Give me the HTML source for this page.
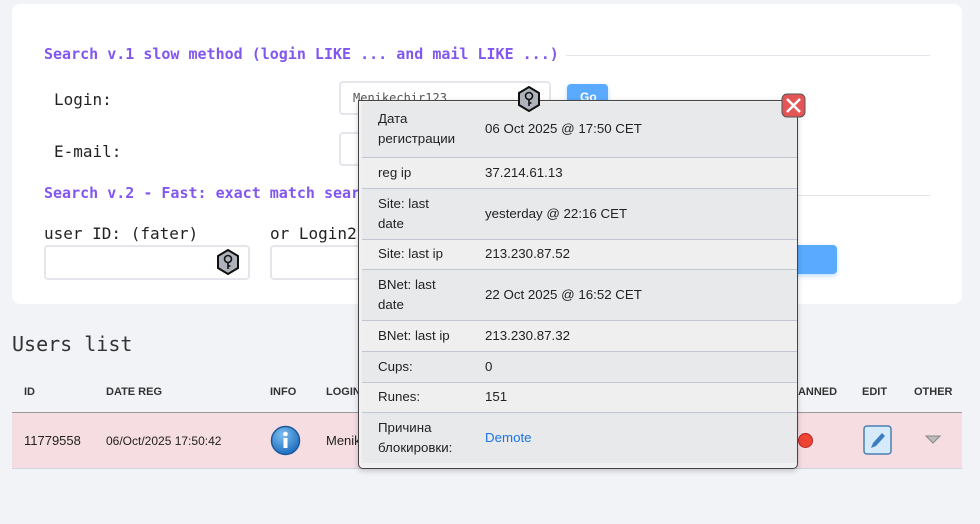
<!DOCTYPE html>
<html><head><meta charset="utf-8"><style>
*{box-sizing:border-box;margin:0;padding:0}
body{width:980px;height:524px;background:#f2f3f7;position:relative;overflow:hidden;font-family:"Liberation Sans",sans-serif}
.mono{font-family:"DejaVu Sans Mono","Liberation Mono",monospace}
.card{position:absolute;left:12px;top:4px;width:950px;height:300px;background:#fff;border-radius:8px}
.h{position:absolute;color:#8257f0;font-size:15px;font-weight:bold}
.line{position:absolute;height:1px;background:#e2e4ea}
.lbl{position:absolute;font-size:16px;color:#222}
.inp{position:absolute;border:2px solid #e4e6ec;border-radius:4px;background:#fff}
.btn{position:absolute;background:#5aabff;border-radius:4px;box-shadow:0 2px 5px rgba(90,170,255,.4)}
.hex{position:absolute;width:26px;height:26px}
.th{position:absolute;top:386px;font-size:11px;font-weight:bold;color:#333}
.pop{position:absolute;left:358px;top:100px;width:440px;height:369px;background:#f0f0f0;border:1px solid #444;border-radius:0 0 5px 5px;box-shadow:0 2px 6px rgba(0,0,0,.2)}
.pop table{position:absolute;left:3px;top:1px;width:435px;border-collapse:collapse;font-size:13.3px;color:#222}
.pop td{border-bottom:1px solid #c1c5d4;padding:0 0 0 16px;line-height:20px;vertical-align:middle}
.pop tr:nth-child(odd){background:#e8e9eb}
.pop tr:nth-child(even){background:#efefef}
.pop td:first-child{width:121px}
.pop td:last-child{padding-left:2px}
</style></head><body>
<div class="card"></div>
<div class="h mono" style="left:44px;top:45px">Search v.1 slow method (login LIKE ... and mail LIKE ...)</div>
<div class="line" style="left:566px;top:55px;width:364px"></div>
<div class="lbl mono" style="left:54px;top:90px">Login:</div>
<div class="lbl mono" style="left:54px;top:142px">E-mail:</div>
<div class="inp" style="left:339px;top:81px;width:212px;height:34px"><span class="mono" style="position:absolute;left:12px;top:8px;font-size:12px;color:#555">Menikechir123</span></div>
<div class="inp" style="left:339px;top:132px;width:212px;height:34px"></div>
<div class="btn" style="left:567px;top:84px;width:41px;height:30px"><span style="position:absolute;left:13px;top:6px;color:#fff;font-size:12px;font-weight:bold">Go</span></div>
<div class="h mono" style="left:44px;top:184px">Search v.2 - Fast: exact match search</div>
<div class="line" style="left:566px;top:195px;width:364px"></div>
<div class="lbl mono" style="left:44px;top:224px">user ID: (fater)</div>
<div class="lbl mono" style="left:270px;top:224px">or Login2</div>
<div class="inp" style="left:44px;top:245px;width:206px;height:35px"></div>
<div class="inp" style="left:270px;top:245px;width:120px;height:35px"></div>
<div class="btn" style="left:760px;top:245px;width:77px;height:29px"></div>
<svg class="hex" style="left:215px;top:249px" viewBox="0 0 26 26"><polygon points="13,1 23,7 23,19 13,25 3,19 3,7" fill="#aeb3bb" stroke="#111" stroke-width="2"/><circle cx="13" cy="10" r="3.5" fill="none" stroke="#111" stroke-width="1.6"/><path d="M13 13.5V20M13 17h2.5" stroke="#111" stroke-width="1.6" fill="none"/></svg>

<div class="mono" style="position:absolute;left:12px;top:332px;font-size:20px;color:#333">Users list</div>
<div class="th" style="left:24px">ID</div>
<div class="th" style="left:106px">DATE REG</div>
<div class="th" style="left:270px">INFO</div>
<div class="th" style="left:326px">LOGIN</div>
<div class="th" style="left:790px">BANNED</div>
<div class="th" style="left:862px">EDIT</div>
<div class="th" style="left:914px">OTHER</div>
<div style="position:absolute;left:12px;top:412px;width:950px;height:57px;background:#f5dde1;border-top:1px solid #999;border-bottom:1px solid #cfd3de"></div>
<div style="position:absolute;left:24px;top:433px;font-size:13px;color:#222">11779558</div>
<div style="position:absolute;left:106px;top:434px;font-size:12px;color:#222">06/Oct/2025 17:50:42</div>
<div style="position:absolute;left:326px;top:433px;font-size:13px;color:#222">Menik</div>
<svg style="position:absolute;left:270px;top:425px" width="31" height="31" viewBox="0 0 31 31"><defs><radialGradient id="g" cx="40%" cy="30%" r="70%"><stop offset="0" stop-color="#7fbdf0"/><stop offset="1" stop-color="#1f6fc0"/></radialGradient></defs><circle cx="15.5" cy="15.5" r="14" fill="url(#g)" stroke="#1a5a9a" stroke-width="1.5"/><circle cx="15.5" cy="9" r="2.3" fill="#fff"/><rect x="13.5" y="13" width="4" height="10" fill="#fff"/></svg>
<svg style="position:absolute;left:797px;top:432px" width="17" height="17"><circle cx="8.5" cy="8.5" r="7" fill="#ee4433" stroke="#b22" stroke-width="1"/></svg>
<svg style="position:absolute;left:863px;top:425px" width="29" height="30" viewBox="0 0 29 30"><rect x="1" y="1" width="27" height="28" rx="3" fill="#d5ebfb" stroke="#4a7fb0" stroke-width="1.5"/><path d="M8 23l2-5 9-10 3 3-9 10z" fill="#3a7cc0"/></svg>
<svg style="position:absolute;left:925px;top:435px" width="16" height="10"><polygon points="1,1 15,1 8,8" fill="#bbb" stroke="#888"/></svg>

<div class="pop"><table>
<tr style="height:55px"><td>Дата<br>регистрации</td><td>06 Oct 2025 @ 17:50 CET</td></tr>
<tr style="height:31px"><td>reg ip</td><td>37.214.61.13</td></tr>
<tr style="height:51px"><td>Site: last<br>date</td><td>yesterday @ 22:16 CET</td></tr>
<tr style="height:30px"><td>Site: last ip</td><td>213.230.87.52</td></tr>
<tr style="height:51px"><td>BNet: last<br>date</td><td>22 Oct 2025 @ 16:52 CET</td></tr>
<tr style="height:31px"><td>BNet: last ip</td><td>213.230.87.32</td></tr>
<tr style="height:31px"><td>Cups:</td><td>0</td></tr>
<tr style="height:30px"><td>Runes:</td><td>151</td></tr>
<tr style="height:51px"><td style="border-bottom:none">Причина<br>блокировки:</td><td style="border-bottom:none;color:#1a73e8">Demote</td></tr>
</table></div>
<svg class="hex" style="left:516px;top:86px" viewBox="0 0 26 26"><polygon points="13,1 23,7 23,19 13,25 3,19 3,7" fill="#aeb3bb" stroke="#111" stroke-width="2"/><circle cx="13" cy="10" r="3.5" fill="none" stroke="#111" stroke-width="1.6"/><path d="M13 13.5V20M13 17h2.5" stroke="#111" stroke-width="1.6" fill="none"/></svg>
<svg style="position:absolute;left:781px;top:93px" width="25" height="25" viewBox="0 0 25 25"><rect x="1" y="1" width="23" height="23" rx="5" fill="#e65555" stroke="#555" stroke-width="1"/><path d="M6 6L19 19M19 6L6 19" stroke="#fff" stroke-width="2.5"/></svg>
</body></html>
